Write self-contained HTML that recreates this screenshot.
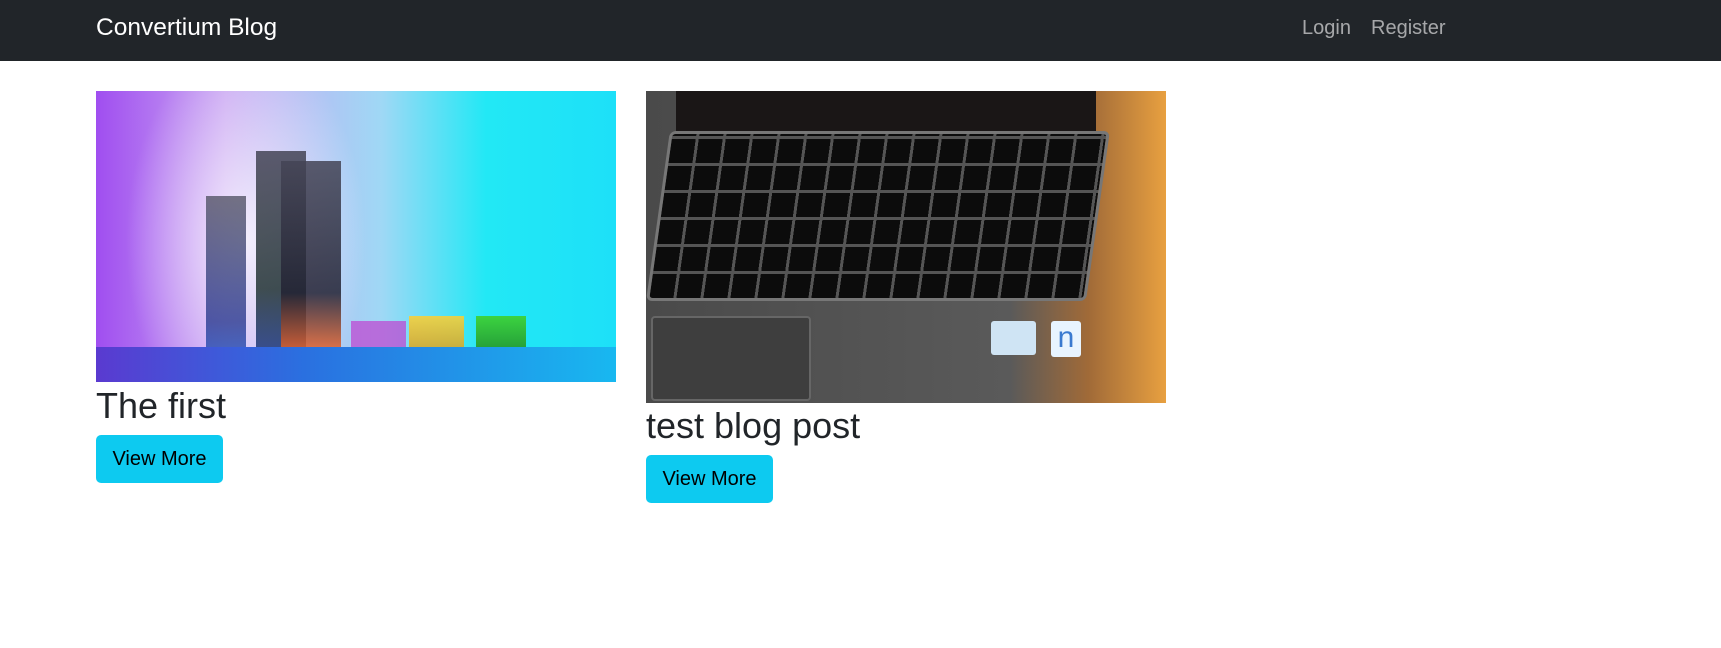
<!DOCTYPE html>
<html><head><meta charset="utf-8"><style>
*{margin:0;padding:0;box-sizing:border-box}
body{width:1721px;height:648px;background:#fff;font-family:"Liberation Sans",sans-serif;position:relative;overflow:hidden;color:#212529}
.nav{position:absolute;left:0;top:0;width:1721px;height:61px;background:#212529}
.brand{position:absolute;left:96px;top:14px;font-size:24.5px;color:#fff}
.link{position:absolute;top:17px;font-size:20px;color:rgba(255,255,255,.6)}
.img{position:absolute;overflow:hidden}
.i1{left:96px;top:91px;width:520px;height:291px;background:
radial-gradient(ellipse 120px 200px at 150px 150px,rgba(255,255,255,.8),transparent),
linear-gradient(90deg,#a04ef0 0%,#c9a6f2 25%,#9fd8f5 55%,#22e8f5 75%,#1de0f8 100%)}
.i1 .floor{position:absolute;left:0;bottom:0;width:100%;height:35px;background:linear-gradient(90deg,#5a3ad0,#2a70e0 40%,#18b8f0)}
.i2{left:646px;top:91px;width:520px;height:312px;background:linear-gradient(90deg,#4a4a4a,#5a5a5a 70%,#a06a38 85%,#e8a040 100%)}
.kb{position:absolute;left:0;top:40px;width:440px;height:170px;background:
repeating-linear-gradient(90deg,transparent 0 24px,#555 24px 27px),
repeating-linear-gradient(0deg,#0c0c0c 0 24px,#555 24px 27px);border:3px solid #777;border-radius:6px;transform:skewX(-8deg);transform-origin:bottom}
.scr{position:absolute;left:30px;top:0;width:420px;height:40px;background:#1a1616}
.pad{position:absolute;left:5px;top:225px;width:160px;height:85px;background:#3e3e3e;border:2px solid #666;border-radius:4px}
h2{position:absolute;font-size:36px;font-weight:normal;color:#212529;line-height:1}
.btn{position:absolute;width:127px;height:48px;background:#0dcaf0;border-radius:5px;font-size:20px;color:#000;text-align:center;line-height:48px}
</style></head><body>
<div class="nav"><div class="brand">Convertium Blog</div><div class="link" style="left:1302px">Login</div><div class="link" style="left:1371px">Register</div></div>
<div class="img i1">
<div style="position:absolute;left:110px;top:105px;width:40px;height:180px;background:linear-gradient(#556 ,#2a3a90 70%,#1a5ad0);border-radius:0 0 20px 20px;opacity:.8"></div>
<div style="position:absolute;left:160px;top:60px;width:50px;height:230px;background:linear-gradient(#445,#233 60%,#1a3aa0);border-radius:0 0 25px 25px;opacity:.85"></div>
<div style="position:absolute;left:185px;top:70px;width:60px;height:220px;background:linear-gradient(#445,#223 60%,#e0602a 85%,#f0b020);border-radius:0 0 30px 30px;opacity:.85"></div>
<div style="position:absolute;left:313px;top:225px;width:55px;height:60px;background:linear-gradient(#ffd030,#c08010);opacity:.85"></div>
<div style="position:absolute;left:380px;top:225px;width:50px;height:60px;background:linear-gradient(#40d020,#106010);opacity:.85"></div>
<div style="position:absolute;left:255px;top:230px;width:55px;height:55px;background:#c040d0;opacity:.7"></div>
<div class="floor"></div></div>
<div class="img i2"><div class="scr"></div><div class="kb"></div><div class="pad"></div>
<div style="position:absolute;left:405px;top:230px;width:30px;height:36px;background:#e8f4ff;border-radius:3px;color:#3a7ad0;font-size:30px;text-align:center;line-height:34px">n</div>
<div style="position:absolute;left:345px;top:230px;width:45px;height:34px;background:#cfe4f4;border-radius:3px"></div></div>
<h2 style="left:96px;top:388px">The first</h2>
<div class="btn" style="left:96px;top:435px">View More</div>
<h2 style="left:646px;top:408px">test blog post</h2>
<div class="btn" style="left:646px;top:455px">View More</div>
</body></html>
